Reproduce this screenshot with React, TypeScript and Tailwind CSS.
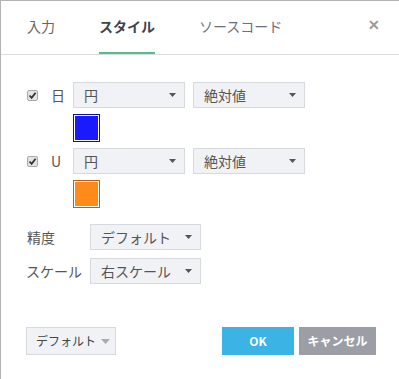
import React from 'react';

const font = { fontFamily: '"Noto Sans CJK JP", "Noto Sans", sans-serif' };

function Caret() {
  return (
    <svg width="7" height="4" viewBox="0 0 7 4" className="shrink-0">
      <path d="M0 0 H7 L3.5 4 Z" fill="#555" />
    </svg>
  );
}

function Select({ label, width }: { label: string; width: string }) {
  return (
    <div
      className={`${width} h-[26px] flex items-center justify-between pl-[10px] pr-[8px] bg-[#f0f2f5] border border-[#d6d9de] text-[14px] text-[#555]`}
    >
      <span>{label}</span>
      <Caret />
    </div>
  );
}

function Check() {
  return (
    <span className="w-[11px] h-[11px] rounded-[2px] border border-[#a9a9a9] bg-[#e4e4e4] flex items-center justify-center">
      <svg width="9" height="9" viewBox="0 0 9 9">
        <path d="M1.5 4.5 L3.6 6.8 L7.6 1.8" stroke="#333" strokeWidth="1.8" fill="none" />
      </svg>
    </span>
  );
}

function Swatch({ border, fill }: { border: string; fill: string }) {
  return (
    <div className={`ml-[47px] mt-[6px] w-[27px] h-[28px] border ${border} p-px bg-white`}>
      <div className={`w-full h-full ${fill}`} />
    </div>
  );
}

function SeriesRow({ name }: { name: string }) {
  return (
    <div className="flex items-center h-[26px]">
      <div className="w-[25px] flex justify-start pl-px">
        <Check />
      </div>
      <span className="w-[22px] text-[14px] text-[#555]">{name}</span>
      <Select label="円" width="w-[112px]" />
      <div className="w-[8px]" />
      <Select label="絶対値" width="w-[112px]" />
    </div>
  );
}

export default function App() {
  return (
    <div className="w-[399px] h-[379px] bg-white border-t border-l border-[#b3b3b3] overflow-hidden" style={font}>
      <div className="h-[54px] border-b border-[#dcdcdc] flex items-end relative">
        <div className="flex items-end ml-[26px] text-[14px]">
          <div className="h-[52px] flex items-center text-[#666] pb-[4px]">入力</div>
          <div className="ml-[44px] h-[52px] flex items-center font-bold text-[#3d4450] border-b-2 border-[#5bbb8d] pb-[2px]">
            スタイル
          </div>
          <div className="ml-[44px] h-[52px] flex items-center text-[#6b707a] pb-[4px]">ソースコード</div>
        </div>
        <div className="absolute right-[19px] top-[16px] text-[#999] text-[14px] font-bold leading-none">✕</div>
      </div>

      <div className="pl-[25px] pt-[27px]">
        <SeriesRow name="日" />
        <Swatch border="border-[#1010a0]" fill="bg-[#1a1aff]" />
        <div className="mt-[6px]">
          <SeriesRow name="U" />
        </div>
        <Swatch border="border-[#c05a1a]" fill="bg-[#ff8a1c]" />

        <div className="mt-[16px] flex items-center h-[26px]">
          <span className="w-[64px] pl-px text-[14px] text-[#555]">精度</span>
          <Select label="デフォルト" width="w-[111px]" />
        </div>
        <div className="mt-[8px] flex items-center h-[26px]">
          <span className="w-[64px] text-[14px] text-[#555] whitespace-nowrap">スケール</span>
          <Select label="右スケール" width="w-[111px]" />
        </div>

        <div className="mt-[43px] flex items-center pr-[23px]">
          <div className="w-[90px] h-[28px] bg-[#f0f2f5] border border-[#d6d9de] flex items-center pl-[9px] text-[12px] text-[#444]">
            <span>デフォルト</span>
            <svg width="9" height="5" viewBox="0 0 9 5" className="ml-[5px]">
              <path d="M0 0 H9 L4.5 5 Z" fill="#aaa" />
            </svg>
          </div>
          <div className="flex-1" />
          <div className="w-[72px] h-[28px] bg-[#3bb3e4] text-white font-bold text-[12px] flex items-center justify-center">
            OK
          </div>
          <div className="ml-[5px] w-[77px] h-[28px] bg-[#9c9ea5] text-white font-bold text-[12px] flex items-center justify-center">
            キャンセル
          </div>
        </div>
      </div>
    </div>
  );
}
